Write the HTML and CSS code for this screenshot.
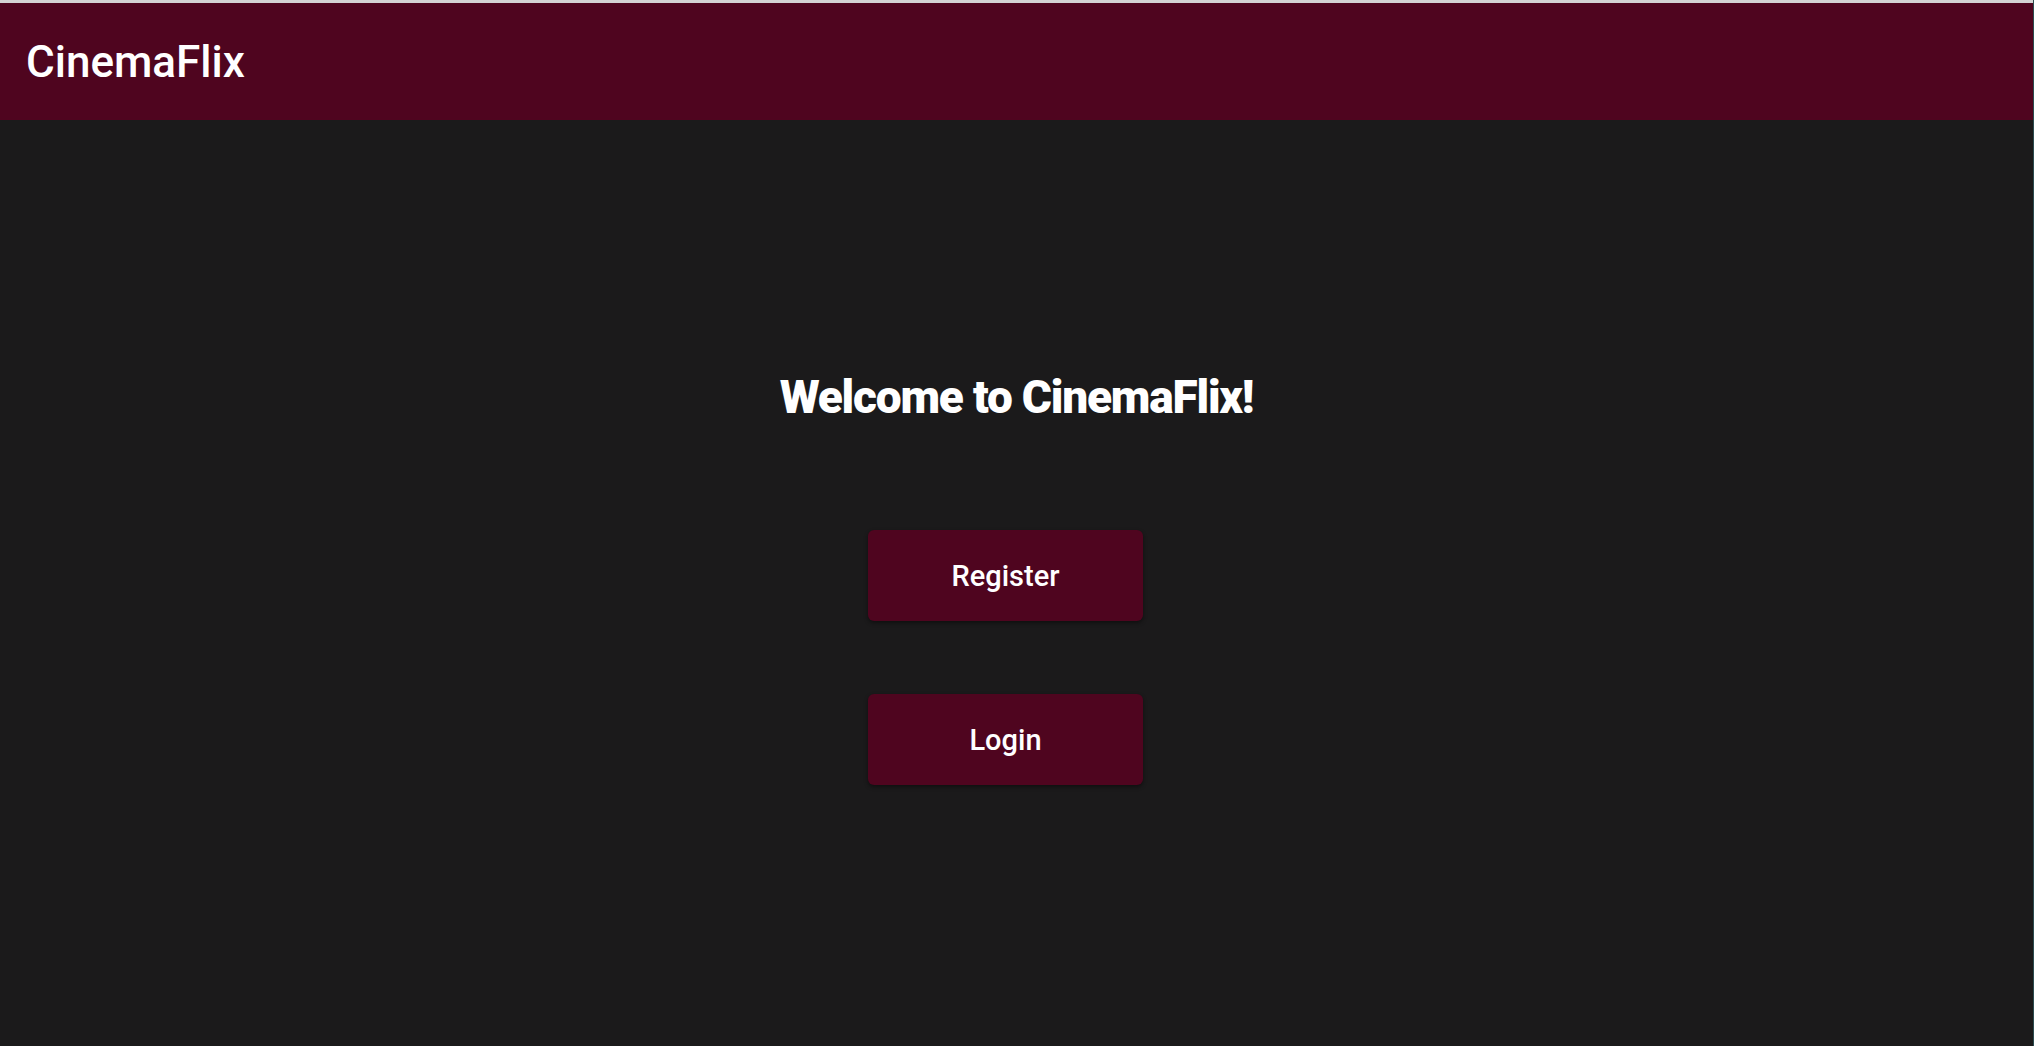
FILE: index.html
```html
<!DOCTYPE html>
<html lang="en">
<head>
<meta charset="utf-8">
<title>CinemaFlix</title>
<link rel="stylesheet" href="styles.css">
</head>
<body>
<div class="topline"></div>
<header class="appbar">
  <div class="brand">CinemaFlix</div>
</header>
<main class="welcome">
  <h1 class="welcome-title">Welcome to CinemaFlix!</h1>
  <div class="actions">
    <button class="action-btn">Register</button>
    <button class="action-btn">Login</button>
  </div>
</main>
</body>
</html>
```
FILE: styles.css
```css
html, body {
  margin: 0;
  padding: 0;
  height: 100%;
}
body {
  background: #1b1a1b;
  font-family: Roboto, "Liberation Sans", sans-serif;
  color: #ffffff;
  display: flex;
  flex-direction: column;
  border-right: 1px solid #2c4c4f;
  box-sizing: border-box;
  overflow: hidden;
}
.topline {
  height: 3px;
  background: #d4d4d4;
  flex: none;
}
.appbar {
  height: 117px;
  background: #4f051f;
  display: flex;
  align-items: center;
  padding-left: 26px;
  flex: none;
}
.brand {
  font-size: 44px;
  font-weight: 500;
  letter-spacing: 0;
}
.welcome {
  flex: 1;
  display: flex;
  flex-direction: column;
  align-items: center;
  padding-top: 250px;
}
.welcome-title {
  margin: 0;
  font-size: 46px;
  font-weight: 900;
  line-height: 1.2;
  letter-spacing: -1.2px;
}
.actions {
  display: flex;
  flex-direction: column;
  gap: 73px;
  margin-top: 105px;
  margin-right: 22px;
}
.action-btn {
  width: 275px;
  height: 91px;
  border: none;
  border-radius: 6px;
  background: #4f051f;
  color: #ffffff;
  font-family: Roboto, "Liberation Sans", sans-serif;
  font-size: 29px;
  font-weight: 500;
  box-shadow: 0 2px 4px rgba(0, 0, 0, 0.45);
  cursor: pointer;
}
```
